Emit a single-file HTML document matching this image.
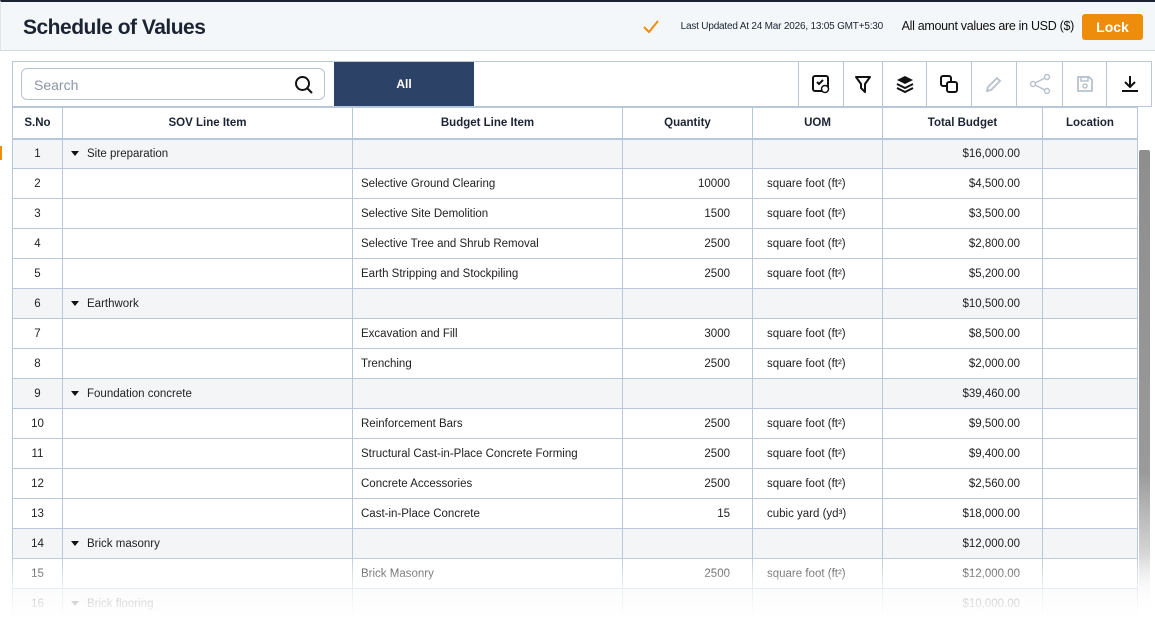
<!DOCTYPE html><html><head><style>
*{box-sizing:border-box;margin:0;padding:0}
body{width:1155px;height:644px;overflow:hidden;background:#fff;font-family:"Liberation Sans",sans-serif;position:relative;color:#1a1a1a}
.hdr{position:absolute;left:0;top:0;width:1155px;height:51px;background:#f3f7f9;border-top:2px solid #1c2433;border-bottom:1px solid #d6dbe2;border-left:1px solid #e0e4ea}
.title{position:absolute;left:22px;top:14px;font-size:21px;font-weight:bold;color:#1c2433;letter-spacing:-0.5px}
.lu{position:absolute;right:272px;top:19px;font-size:10px;color:#1c2433;letter-spacing:-0.2px}
.usd{position:absolute;right:81px;top:17px;font-size:12.5px;color:#111;letter-spacing:-0.3px}
.lock{position:absolute;left:1081px;top:12px;width:61px;height:26px;background:#ee8c0c;border-radius:3px;color:#fff;font-weight:bold;font-size:14px;text-align:center;line-height:26px}
.tb{position:absolute;left:12px;top:61px;width:1140px;height:46px;border:1px solid #b8c8da;background:#fff}
.search{position:absolute;left:21px;top:68px;width:304px;height:32px;border:1px solid #b9c3cf;border-radius:6px;font-size:14px;color:#8a96a3;padding:8px 12px}
.all{position:absolute;left:334px;top:62px;width:140px;height:44px;background:#2c4266;color:#fff;font-weight:bold;font-size:12px;text-align:center;line-height:44px}
.ib{position:absolute;top:62px;height:44px;border-left:1px solid #b8c8da;display:flex;align-items:center;justify-content:center}
table{position:absolute;left:12px;top:107px;border-collapse:collapse;font-size:11.5px;table-layout:fixed;color:#222}
td,th{border:1px solid #b8c8da;height:30px;padding:0 8px;white-space:nowrap}
th{font-weight:bold;font-size:11.5px;color:#1c2433;height:31px;border-bottom:2px solid #b8c8da}
td.c{text-align:center}td.r{text-align:right;padding-right:22px}
td.u{padding-left:14px}
tr.g td{background:#f3f5f7}
.tri{display:inline-block;width:0;height:0;border-left:4px solid transparent;border-right:4px solid transparent;border-top:5px solid #111;margin:0 8px 1px 0}
.fade{position:absolute;left:0;top:555px;width:1155px;height:89px;background:linear-gradient(rgba(255,255,255,0),rgba(255,255,255,.6) 30%,#fff 70%)}
.sb{position:absolute;left:1139px;top:150px;width:11px;height:460px;background:linear-gradient(#8e8e8e,#9a9a9a 70%,rgba(255,255,255,0));border-radius:2px}
</style></head><body>
<div class="hdr"><div class="title">Schedule of Values</div>
<svg style="position:absolute;left:642px;top:18px" width="16" height="14"><path d="M1 7l5 5 9-11" stroke="#ee8c0c" stroke-width="2" fill="none"/></svg>
<div class="lu">Last Updated At 24 Mar 2026, 13:05 GMT+5:30</div>
<div class="usd">All amount values are in USD ($)</div><div class="lock">Lock</div></div>
<div class="tb"></div>
<div class="search">Search<svg style="position:absolute;right:10px;top:6px" width="20" height="20"><circle cx="8.5" cy="8.5" r="6.5" stroke="#111" stroke-width="2" fill="none"/><path d="M13 13l5 5" stroke="#111" stroke-width="2"/></svg></div>
<div class="all">All</div>
<div class="ib" style="left:798px;width:45px"><svg width="20" height="20"><rect x="2" y="2" width="15" height="15" rx="2" stroke="#111" stroke-width="2" fill="none"/><path d="M6 8l2 2 4-4" stroke="#111" stroke-width="2" fill="none"/><circle cx="14" cy="15" r="3.5" fill="#fff" stroke="#111" stroke-width="1.5"/></svg></div>
<div class="ib" style="left:843px;width:39px"><svg width="18" height="20"><path d="M2 3h14l-5 7v8l-4-4v-4z" stroke="#111" stroke-width="2" fill="none" stroke-linejoin="round"/></svg></div>
<div class="ib" style="left:882px;width:44px"><svg width="20" height="20"><path d="M10 2l8 4-8 4-8-4z" fill="#111"/><path d="M2 10l8 4 8-4M2 14l8 4 8-4" stroke="#111" stroke-width="2" fill="none"/></svg></div>
<div class="ib" style="left:926px;width:45px"><svg width="20" height="20"><rect x="2" y="2" width="10" height="10" rx="2" stroke="#111" stroke-width="2" fill="none"/><rect x="8" y="8" width="10" height="10" rx="2" stroke="#111" stroke-width="2" fill="#fff"/></svg></div>
<div class="ib" style="left:971px;width:45px"><svg width="20" height="20"><path d="M3 17l1-4 9-9 3 3-9 9z" stroke="#b8c2cc" stroke-width="1.8" fill="none"/></svg></div>
<div class="ib" style="left:1016px;width:46px"><svg width="22" height="20"><circle cx="4" cy="10" r="2.5" stroke="#b8c2cc" stroke-width="1.5" fill="none"/><circle cx="18" cy="3" r="2.5" stroke="#b8c2cc" stroke-width="1.5" fill="none"/><circle cx="18" cy="17" r="2.5" stroke="#b8c2cc" stroke-width="1.5" fill="none"/><path d="M6 9l10-5M6 11l10 5" stroke="#b8c2cc" stroke-width="1.5"/></svg></div>
<div class="ib" style="left:1062px;width:44px"><svg width="20" height="20"><path d="M3 3h11l3 3v11H3z" stroke="#b8c2cc" stroke-width="1.8" fill="none"/><rect x="6" y="3" width="7" height="4" stroke="#b8c2cc" stroke-width="1.5" fill="none"/><circle cx="10" cy="12" r="2" stroke="#b8c2cc" stroke-width="1.5" fill="none"/></svg></div>
<div class="ib" style="left:1106px;width:46px"><svg width="20" height="20"><path d="M10 2v11M5 8l5 5 5-5M2 17h16" stroke="#111" stroke-width="2" fill="none"/></svg></div>
<table><colgroup><col style="width:50px"><col style="width:290px"><col style="width:270px"><col style="width:130px"><col style="width:130px"><col style="width:160px"><col style="width:95px"></colgroup>
<tr><th>S.No</th><th>SOV Line Item</th><th>Budget Line Item</th><th>Quantity</th><th>UOM</th><th>Total Budget</th><th>Location</th></tr>
<tr class="g"><td class="c">1</td><td><span class="tri"></span>Site preparation</td><td></td><td></td><td></td><td class="r">$16,000.00</td><td></td></tr>
<tr><td class="c">2</td><td></td><td>Selective Ground Clearing</td><td class="r">10000</td><td class="u">square foot (ft²)</td><td class="r">$4,500.00</td><td></td></tr>
<tr><td class="c">3</td><td></td><td>Selective Site Demolition</td><td class="r">1500</td><td class="u">square foot (ft²)</td><td class="r">$3,500.00</td><td></td></tr>
<tr><td class="c">4</td><td></td><td>Selective Tree and Shrub Removal</td><td class="r">2500</td><td class="u">square foot (ft²)</td><td class="r">$2,800.00</td><td></td></tr>
<tr><td class="c">5</td><td></td><td>Earth Stripping and Stockpiling</td><td class="r">2500</td><td class="u">square foot (ft²)</td><td class="r">$5,200.00</td><td></td></tr>
<tr class="g"><td class="c">6</td><td><span class="tri"></span>Earthwork</td><td></td><td></td><td></td><td class="r">$10,500.00</td><td></td></tr>
<tr><td class="c">7</td><td></td><td>Excavation and Fill</td><td class="r">3000</td><td class="u">square foot (ft²)</td><td class="r">$8,500.00</td><td></td></tr>
<tr><td class="c">8</td><td></td><td>Trenching</td><td class="r">2500</td><td class="u">square foot (ft²)</td><td class="r">$2,000.00</td><td></td></tr>
<tr class="g"><td class="c">9</td><td><span class="tri"></span>Foundation concrete</td><td></td><td></td><td></td><td class="r">$39,460.00</td><td></td></tr>
<tr><td class="c">10</td><td></td><td>Reinforcement Bars</td><td class="r">2500</td><td class="u">square foot (ft²)</td><td class="r">$9,500.00</td><td></td></tr>
<tr><td class="c">11</td><td></td><td>Structural Cast-in-Place Concrete Forming</td><td class="r">2500</td><td class="u">square foot (ft²)</td><td class="r">$9,400.00</td><td></td></tr>
<tr><td class="c">12</td><td></td><td>Concrete Accessories</td><td class="r">2500</td><td class="u">square foot (ft²)</td><td class="r">$2,560.00</td><td></td></tr>
<tr><td class="c">13</td><td></td><td>Cast-in-Place Concrete</td><td class="r">15</td><td class="u">cubic yard (yd³)</td><td class="r">$18,000.00</td><td></td></tr>
<tr class="g"><td class="c">14</td><td><span class="tri"></span>Brick masonry</td><td></td><td></td><td></td><td class="r">$12,000.00</td><td></td></tr>
<tr><td class="c">15</td><td></td><td>Brick Masonry</td><td class="r">2500</td><td class="u">square foot (ft²)</td><td class="r">$12,000.00</td><td></td></tr>
<tr class="g"><td class="c">16</td><td><span class="tri"></span>Brick flooring</td><td></td><td></td><td></td><td class="r">$10,000.00</td><td></td></tr>
</table>
<div style="position:absolute;left:0;top:146px;width:2px;height:14px;background:#ee8c0c"></div>
<div class="sb"></div>
<div class="fade"></div>
</body></html>
